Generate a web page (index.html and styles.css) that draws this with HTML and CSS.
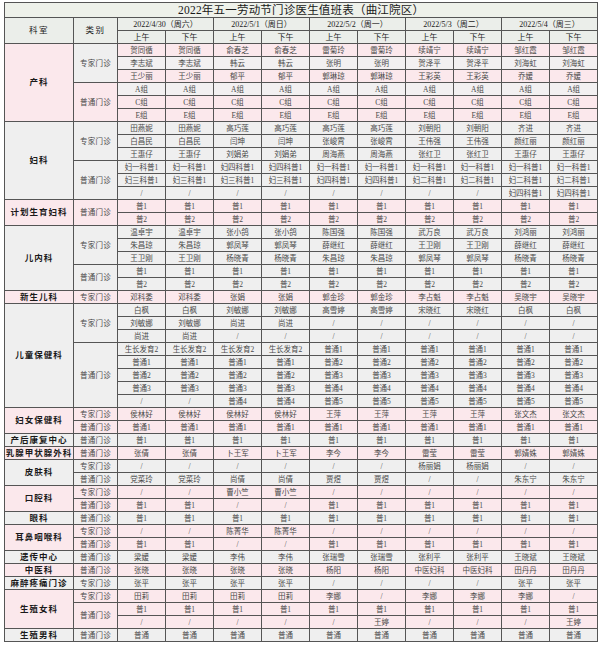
FILE: index.html
```html
<!DOCTYPE html>
<html lang="zh-CN">
<head>
<meta charset="utf-8">
<title>2022年五一劳动节门诊医生值班表（曲江院区）</title>
<link rel="stylesheet" href="styles.css">
</head>
<body>
<table class="duty">
<colgroup>
<col class="c-dept"><col class="c-type">
<col class="c-day"><col class="c-day"><col class="c-day"><col class="c-day"><col class="c-day">
<col class="c-day"><col class="c-day"><col class="c-day"><col class="c-day"><col class="c-day">
</colgroup>
<thead>
<tr class="title-row"><th colspan="12" class="title">2022年五一劳动节门诊医生值班表（曲江院区）</th></tr>
<tr class="date-row">
<th rowspan="2" class="hd">科室</th><th rowspan="2" class="hd">类别</th>
<th colspan="2">2022/4/30（周六）</th><th colspan="2">2022/5/1（周日）</th><th colspan="2">2022/5/2（周一）</th><th colspan="2">2022/5/3（周二）</th><th colspan="2">2022/5/4（周三）</th>
</tr>
<tr class="ampm-row">
<th>上午</th><th>下午</th><th>上午</th><th>下午</th><th>上午</th><th>下午</th><th>上午</th><th>下午</th><th>上午</th><th>下午</th>
</tr>
</thead>

<tbody class="pink">
<tr><th rowspan="6" class="dept">产科</th><td rowspan="3" class="type gray-cell">专家门诊</td><td>贺同循</td><td>贺同循</td><td>俞春芝</td><td>俞春芝</td><td>雷菊玲</td><td>雷菊玲</td><td>续靖宁</td><td>续靖宁</td><td>邹红霞</td><td>邹红霞</td></tr>
<tr class="alt"><td>李志斌</td><td>李志斌</td><td>韩云</td><td>韩云</td><td>张明</td><td>张明</td><td>贺泽平</td><td>贺泽平</td><td>刘海虹</td><td>刘海虹</td></tr>
<tr><td>王少丽</td><td>王少丽</td><td>郁平</td><td>郁平</td><td>郭琳琼</td><td>郭琳琼</td><td>王彩英</td><td>王彩英</td><td>乔媛</td><td>乔媛</td></tr>
<tr class="alt"><td rowspan="3" class="type pink-cell">普通门诊</td><td>A组</td><td>A组</td><td>A组</td><td>A组</td><td>A组</td><td>A组</td><td>A组</td><td>A组</td><td>A组</td><td>A组</td></tr>
<tr><td>C组</td><td>C组</td><td>C组</td><td>C组</td><td>C组</td><td>C组</td><td>C组</td><td>C组</td><td>C组</td><td>C组</td></tr>
<tr><td>E组</td><td>E组</td><td>E组</td><td>E组</td><td>E组</td><td>E组</td><td>E组</td><td>E组</td><td>E组</td><td>E组</td></tr>
</tbody>

<tbody class="gray">
<tr><th rowspan="6" class="dept">妇科</th><td rowspan="3" class="type">专家门诊</td><td>田燕妮</td><td>田燕妮</td><td>高巧莲</td><td>高巧莲</td><td>高巧莲</td><td>高巧莲</td><td>刘朝阳</td><td>刘朝阳</td><td>齐进</td><td>齐进</td></tr>
<tr><td>白昌民</td><td>白昌民</td><td>闫坤</td><td>闫坤</td><td>张峻霄</td><td>张峻霄</td><td>王伟强</td><td>王伟强</td><td>颜红丽</td><td>颜红丽</td></tr>
<tr><td>王惠仔</td><td>王惠仔</td><td>刘娟弟</td><td>刘娟弟</td><td>周海燕</td><td>周海燕</td><td>张红卫</td><td>张红卫</td><td>王惠仔</td><td>王惠仔</td></tr>
<tr><td rowspan="3" class="type">普通门诊</td><td>妇一科普1</td><td>妇一科普1</td><td>妇四科普1</td><td>妇四科普1</td><td>妇一科普1</td><td>妇一科普1</td><td>妇一科普1</td><td>妇一科普1</td><td>妇一科普1</td><td>妇一科普1</td></tr>
<tr><td>妇三科普1</td><td>妇三科普1</td><td>妇三科普1</td><td>妇三科普1</td><td>妇四科普1</td><td>妇四科普1</td><td>妇二科普1</td><td>妇二科普1</td><td>妇二科普1</td><td>妇二科普1</td></tr>
<tr><td>/</td><td>/</td><td>/</td><td>/</td><td>/</td><td>/</td><td>/</td><td>/</td><td>妇四科普1</td><td>妇四科普1</td></tr>
</tbody>

<tbody class="pink">
<tr><th rowspan="2" class="dept">计划生育妇科</th><td rowspan="2" class="type">普通门诊</td><td>普1</td><td>普1</td><td>普1</td><td>普1</td><td>普1</td><td>普1</td><td>普1</td><td>普1</td><td>普1</td><td>普1</td></tr>
<tr><td>普2</td><td>普2</td><td>普2</td><td>普2</td><td>普2</td><td>普2</td><td>普2</td><td>普2</td><td>普2</td><td>普2</td></tr>
</tbody>

<tbody class="gray">
<tr><th rowspan="5" class="dept">儿内科</th><td rowspan="3" class="type">专家门诊</td><td>温卓宇</td><td>温卓宇</td><td>张小鸽</td><td>张小鸽</td><td>陈国强</td><td>陈国强</td><td>武万良</td><td>武万良</td><td>刘鸿丽</td><td>刘鸿丽</td></tr>
<tr><td>朱昌琼</td><td>朱昌琼</td><td>郭凤琴</td><td>郭凤琴</td><td>薛继红</td><td>薛继红</td><td>王卫刚</td><td>王卫刚</td><td>薛继红</td><td>薛继红</td></tr>
<tr><td>王卫刚</td><td>王卫刚</td><td>杨晓青</td><td>杨晓青</td><td>朱昌琼</td><td>朱昌琼</td><td>郭凤琴</td><td>郭凤琴</td><td>杨晓青</td><td>杨晓青</td></tr>
<tr><td rowspan="2" class="type">普通门诊</td><td>普1</td><td>普1</td><td>普1</td><td>普1</td><td>普1</td><td>普1</td><td>普1</td><td>普1</td><td>普1</td><td>普1</td></tr>
<tr><td>普2</td><td>普2</td><td>普2</td><td>普2</td><td>普2</td><td>普2</td><td>普2</td><td>普2</td><td>普2</td><td>普2</td></tr>
</tbody>

<tbody class="pink">
<tr><th class="dept">新生儿科</th><td class="type">专家门诊</td><td>邓科委</td><td>邓科委</td><td>张娟</td><td>张娟</td><td>郭金珍</td><td>郭金珍</td><td>李占魁</td><td>李占魁</td><td>吴晓宇</td><td>吴晓宇</td></tr>
</tbody>

<tbody class="gray">
<tr><th rowspan="8" class="dept">儿童保健科</th><td rowspan="3" class="type">专家门诊</td><td>白枫</td><td>白枫</td><td>刘敏娜</td><td>刘敏娜</td><td>高雪婷</td><td>高雪婷</td><td>宋晓红</td><td>宋晓红</td><td>白枫</td><td>白枫</td></tr>
<tr><td>刘敏娜</td><td>刘敏娜</td><td>尚进</td><td>尚进</td><td>/</td><td>/</td><td>/</td><td>/</td><td>/</td><td>/</td></tr>
<tr><td>尚进</td><td>尚进</td><td>/</td><td>/</td><td>/</td><td>/</td><td>/</td><td>/</td><td>/</td><td>/</td></tr>
<tr><td rowspan="5" class="type">普通门诊</td><td>生长发育2</td><td>生长发育2</td><td>生长发育2</td><td>生长发育2</td><td>普通1</td><td>普通1</td><td>普通1</td><td>普通1</td><td>普通1</td><td>普通1</td></tr>
<tr><td>普通1</td><td>普通1</td><td>普通1</td><td>普通1</td><td>普通2</td><td>普通2</td><td>普通2</td><td>普通2</td><td>普通2</td><td>普通2</td></tr>
<tr><td>普通2</td><td>普通2</td><td>普通2</td><td>普通2</td><td>普通3</td><td>普通3</td><td>普通3</td><td>普通3</td><td>普通3</td><td>普通3</td></tr>
<tr><td>普通3</td><td>普通3</td><td>普通3</td><td>普通3</td><td>普通4</td><td>普通4</td><td>普通4</td><td>普通4</td><td>普通4</td><td>普通4</td></tr>
<tr><td>/</td><td>/</td><td>普通4</td><td>普通4</td><td>普通5</td><td>普通5</td><td>普通5</td><td>普通5</td><td>普通5</td><td>普通5</td></tr>
</tbody>

<tbody class="pink">
<tr><th rowspan="2" class="dept">妇女保健科</th><td class="type">专家门诊</td><td>侯林好</td><td>侯林好</td><td>侯林好</td><td>侯林好</td><td>王萍</td><td>王萍</td><td>王萍</td><td>王萍</td><td>张文杰</td><td>张文杰</td></tr>
<tr><td class="type">普通门诊</td><td>普通1</td><td>普通1</td><td>普通1</td><td>普通1</td><td>普通1</td><td>普通1</td><td>普通1</td><td>普通1</td><td>普通1</td><td>普通1</td></tr>
</tbody>

<tbody class="gray">
<tr><th class="dept">产后康复中心</th><td class="type">普通门诊</td><td>普1</td><td>普1</td><td>普1</td><td>普1</td><td>普1</td><td>普1</td><td>普1</td><td>普1</td><td>普1</td><td>普1</td></tr>
</tbody>

<tbody class="pink">
<tr><th class="dept">乳腺甲状腺外科</th><td class="type">普通门诊</td><td>张倩</td><td>张倩</td><td>卜王军</td><td>卜王军</td><td>李今</td><td>李今</td><td>雷莹</td><td>雷莹</td><td>郭婧姝</td><td>郭婧姝</td></tr>
</tbody>

<tbody class="gray">
<tr><th rowspan="2" class="dept">皮肤科</th><td class="type">专家门诊</td><td>/</td><td>/</td><td>/</td><td>/</td><td>/</td><td>/</td><td>杨丽娟</td><td>杨丽娟</td><td>/</td><td>/</td></tr>
<tr><td class="type">普通门诊</td><td>党菜玲</td><td>党菜玲</td><td>尚倩</td><td>尚倩</td><td>贾煜</td><td>贾煜</td><td>/</td><td>/</td><td>朱东宁</td><td>朱东宁</td></tr>
</tbody>

<tbody class="pink">
<tr><th rowspan="2" class="dept">口腔科</th><td class="type">专家门诊</td><td>/</td><td>/</td><td>曹小竺</td><td>曹小竺</td><td>/</td><td>/</td><td>/</td><td>/</td><td>/</td><td>/</td></tr>
<tr><td class="type">普通门诊</td><td>普1</td><td>普1</td><td>/</td><td>/</td><td>普1</td><td>普1</td><td>普1</td><td>普1</td><td>普1</td><td>普1</td></tr>
</tbody>

<tbody class="gray">
<tr><th class="dept">眼科</th><td class="type">普通门诊</td><td>普1</td><td>普1</td><td>普1</td><td>普1</td><td>普1</td><td>普1</td><td>普1</td><td>普1</td><td>普1</td><td>普1</td></tr>
</tbody>

<tbody class="pink">
<tr><th rowspan="2" class="dept">耳鼻咽喉科</th><td class="type">专家门诊</td><td>/</td><td>/</td><td>陈菁华</td><td>陈菁华</td><td>/</td><td>/</td><td>/</td><td>/</td><td>/</td><td>/</td></tr>
<tr><td class="type">普通门诊</td><td>普1</td><td>普1</td><td>/</td><td>/</td><td>普1</td><td>普1</td><td>普1</td><td>普1</td><td>普1</td><td>普1</td></tr>
</tbody>

<tbody class="gray">
<tr><th class="dept">遗传中心</th><td class="type">普通门诊</td><td>梁媛</td><td>梁媛</td><td>李伟</td><td>李伟</td><td>张瑞雪</td><td>张瑞雪</td><td>张利平</td><td>张利平</td><td>王晓斌</td><td>王晓斌</td></tr>
</tbody>

<tbody class="pink">
<tr><th class="dept">中医科</th><td class="type">普通门诊</td><td>张晓</td><td>张晓</td><td>张晓</td><td>张晓</td><td>杨阳</td><td>杨阳</td><td>中医妇科</td><td>中医妇科</td><td>田丹丹</td><td>田丹丹</td></tr>
</tbody>

<tbody class="gray">
<tr><th class="dept">麻醉疼痛门诊</th><td class="type">专家门诊</td><td>张平</td><td>张平</td><td>张平</td><td>张平</td><td>/</td><td>/</td><td>/</td><td>/</td><td>张平</td><td>张平</td></tr>
</tbody>

<tbody class="pink">
<tr><th rowspan="3" class="dept">生殖女科</th><td class="type">专家门诊</td><td>田莉</td><td>田莉</td><td>田莉</td><td>田莉</td><td>李娜</td><td>/</td><td>李娜</td><td>李娜</td><td>李娜</td><td>/</td></tr>
<tr><td rowspan="2" class="type">普通门诊</td><td>普1</td><td>普1</td><td>普1</td><td>普1</td><td>普1</td><td>普1</td><td>普1</td><td>普1</td><td>普1</td><td>普1</td></tr>
<tr><td>/</td><td>/</td><td>/</td><td>/</td><td>/</td><td>王婷</td><td>/</td><td>/</td><td>/</td><td>王婷</td></tr>
</tbody>

<tbody class="gray">
<tr><th class="dept">生殖男科</th><td class="type">普通门诊</td><td>普通</td><td>普通</td><td>普通</td><td>普通</td><td>普通</td><td>普通</td><td>普通</td><td>普通</td><td>普通</td><td>普通</td></tr>
</tbody>
</table>
</body>
</html>
```

FILE: styles.css
```css
html, body {
  margin: 0;
  padding: 0;
  background: #ffffff;
}

body {
  padding: 2px 4px 0 4px;
  font-family: "Liberation Serif", "Noto Sans CJK SC", serif;
  color: #333333;
}

.duty {
  width: 592px;
  border-collapse: collapse;
  table-layout: fixed;
  border: 1px solid #3a3a3a;
}

.c-dept { width: 69px; }
.c-type { width: 44px; }
.c-day { width: 48px; }

.duty th,
.duty td {
  padding: 0;
  border: 1px solid #555555;
  text-align: center;
  vertical-align: middle;
  white-space: nowrap;
  overflow: hidden;
}

.duty tr {
  height: 13px;
}

.duty td {
  font-size: 7.5px;
  line-height: 11px;
  color: #4a4a4a;
}

.title-row {
  background: #eef1ea;
}

.duty tr.title-row {
  height: 15px;
}

.title {
  font-size: 11.5px;
  line-height: 14px;
  font-weight: normal;
  color: #1a1a1a;
  letter-spacing: 0.2px;
}

.date-row th,
.ampm-row th {
  background: #ebeeea;
  font-weight: normal;
  font-size: 8px;
  line-height: 11px;
  color: #222222;
}

.date-row th.hd {
  font-size: 8.5px;
  letter-spacing: 1.5px;
}

.dept {
  font-size: 8.5px;
  line-height: 11px;
  font-weight: bold;
  color: #1a1a1a;
  letter-spacing: 1px;
}

.type {
  font-size: 7.5px;
  letter-spacing: 0.3px;
}

.pink th,
.pink td {
  background: #fbe8ec;
}

.pink tr.alt td {
  background: #f2f0f1;
}

.gray th,
.gray td {
  background: #efefef;
}

.pink td.gray-cell {
  background: #efefef;
}

.pink tr.alt td.pink-cell {
  background: #fbe8ec;
}
```
